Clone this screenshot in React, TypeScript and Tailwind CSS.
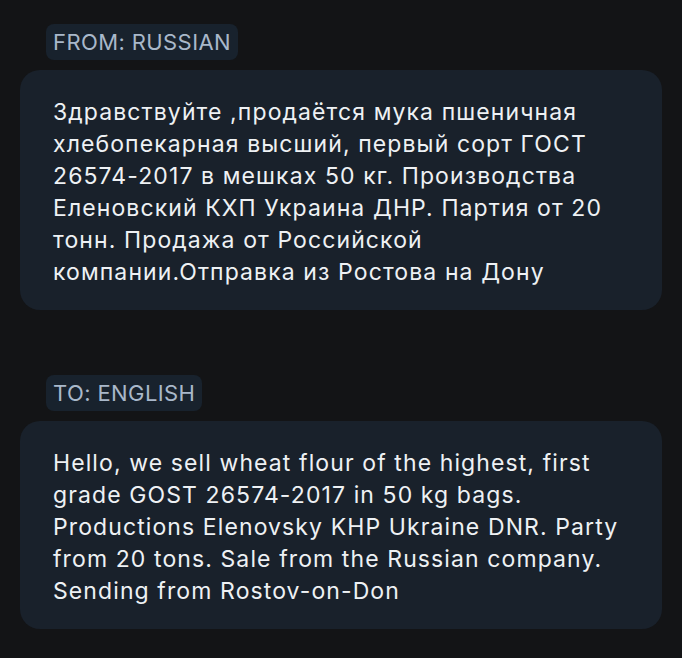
export default function App() {
  const blocks = [
    {
      label: "FROM: RUSSIAN",
      text: "Здравствуйте ,продаётся мука пшеничная хлебопекарная высший, первый сорт ГОСТ 26574-2017 в мешках 50 кг. Производства Еленовский КХП Украина ДНР. Партия от 20 тонн. Продажа от Российской компании.Отправка из Ростова на Дону",
    },
    {
      label: "TO: ENGLISH",
      text: "Hello, we sell wheat flour of the highest, first grade GOST 26574-2017 in 50 kg bags. Productions Elenovsky KHP Ukraine DNR. Party from 20 tons. Sale from the Russian company. Sending from Rostov-on-Don",
    },
  ]

  return (
    <div className="min-h-screen bg-[#131416] px-5 pt-6 font-['Inter',sans-serif]">
      <div className="flex flex-col gap-[65px]">
        {blocks.map((b) => (
          <div key={b.label} className="flex flex-col gap-[10px]">
            <div className="ml-[26px] self-start rounded-lg bg-[#18222d] px-[7px] py-[3px] text-[22px] leading-[30px] tracking-[0.4px] text-[#a9b8ca]">
              {b.label}
            </div>
            <div className="rounded-[20px] bg-[#19212b] px-[33px] pt-[26px] pb-[22px] text-[23px] leading-[32px] tracking-[1.1px] text-[#eef1f4]">
              {b.text}
            </div>
          </div>
        ))}
      </div>
    </div>
  )
}
